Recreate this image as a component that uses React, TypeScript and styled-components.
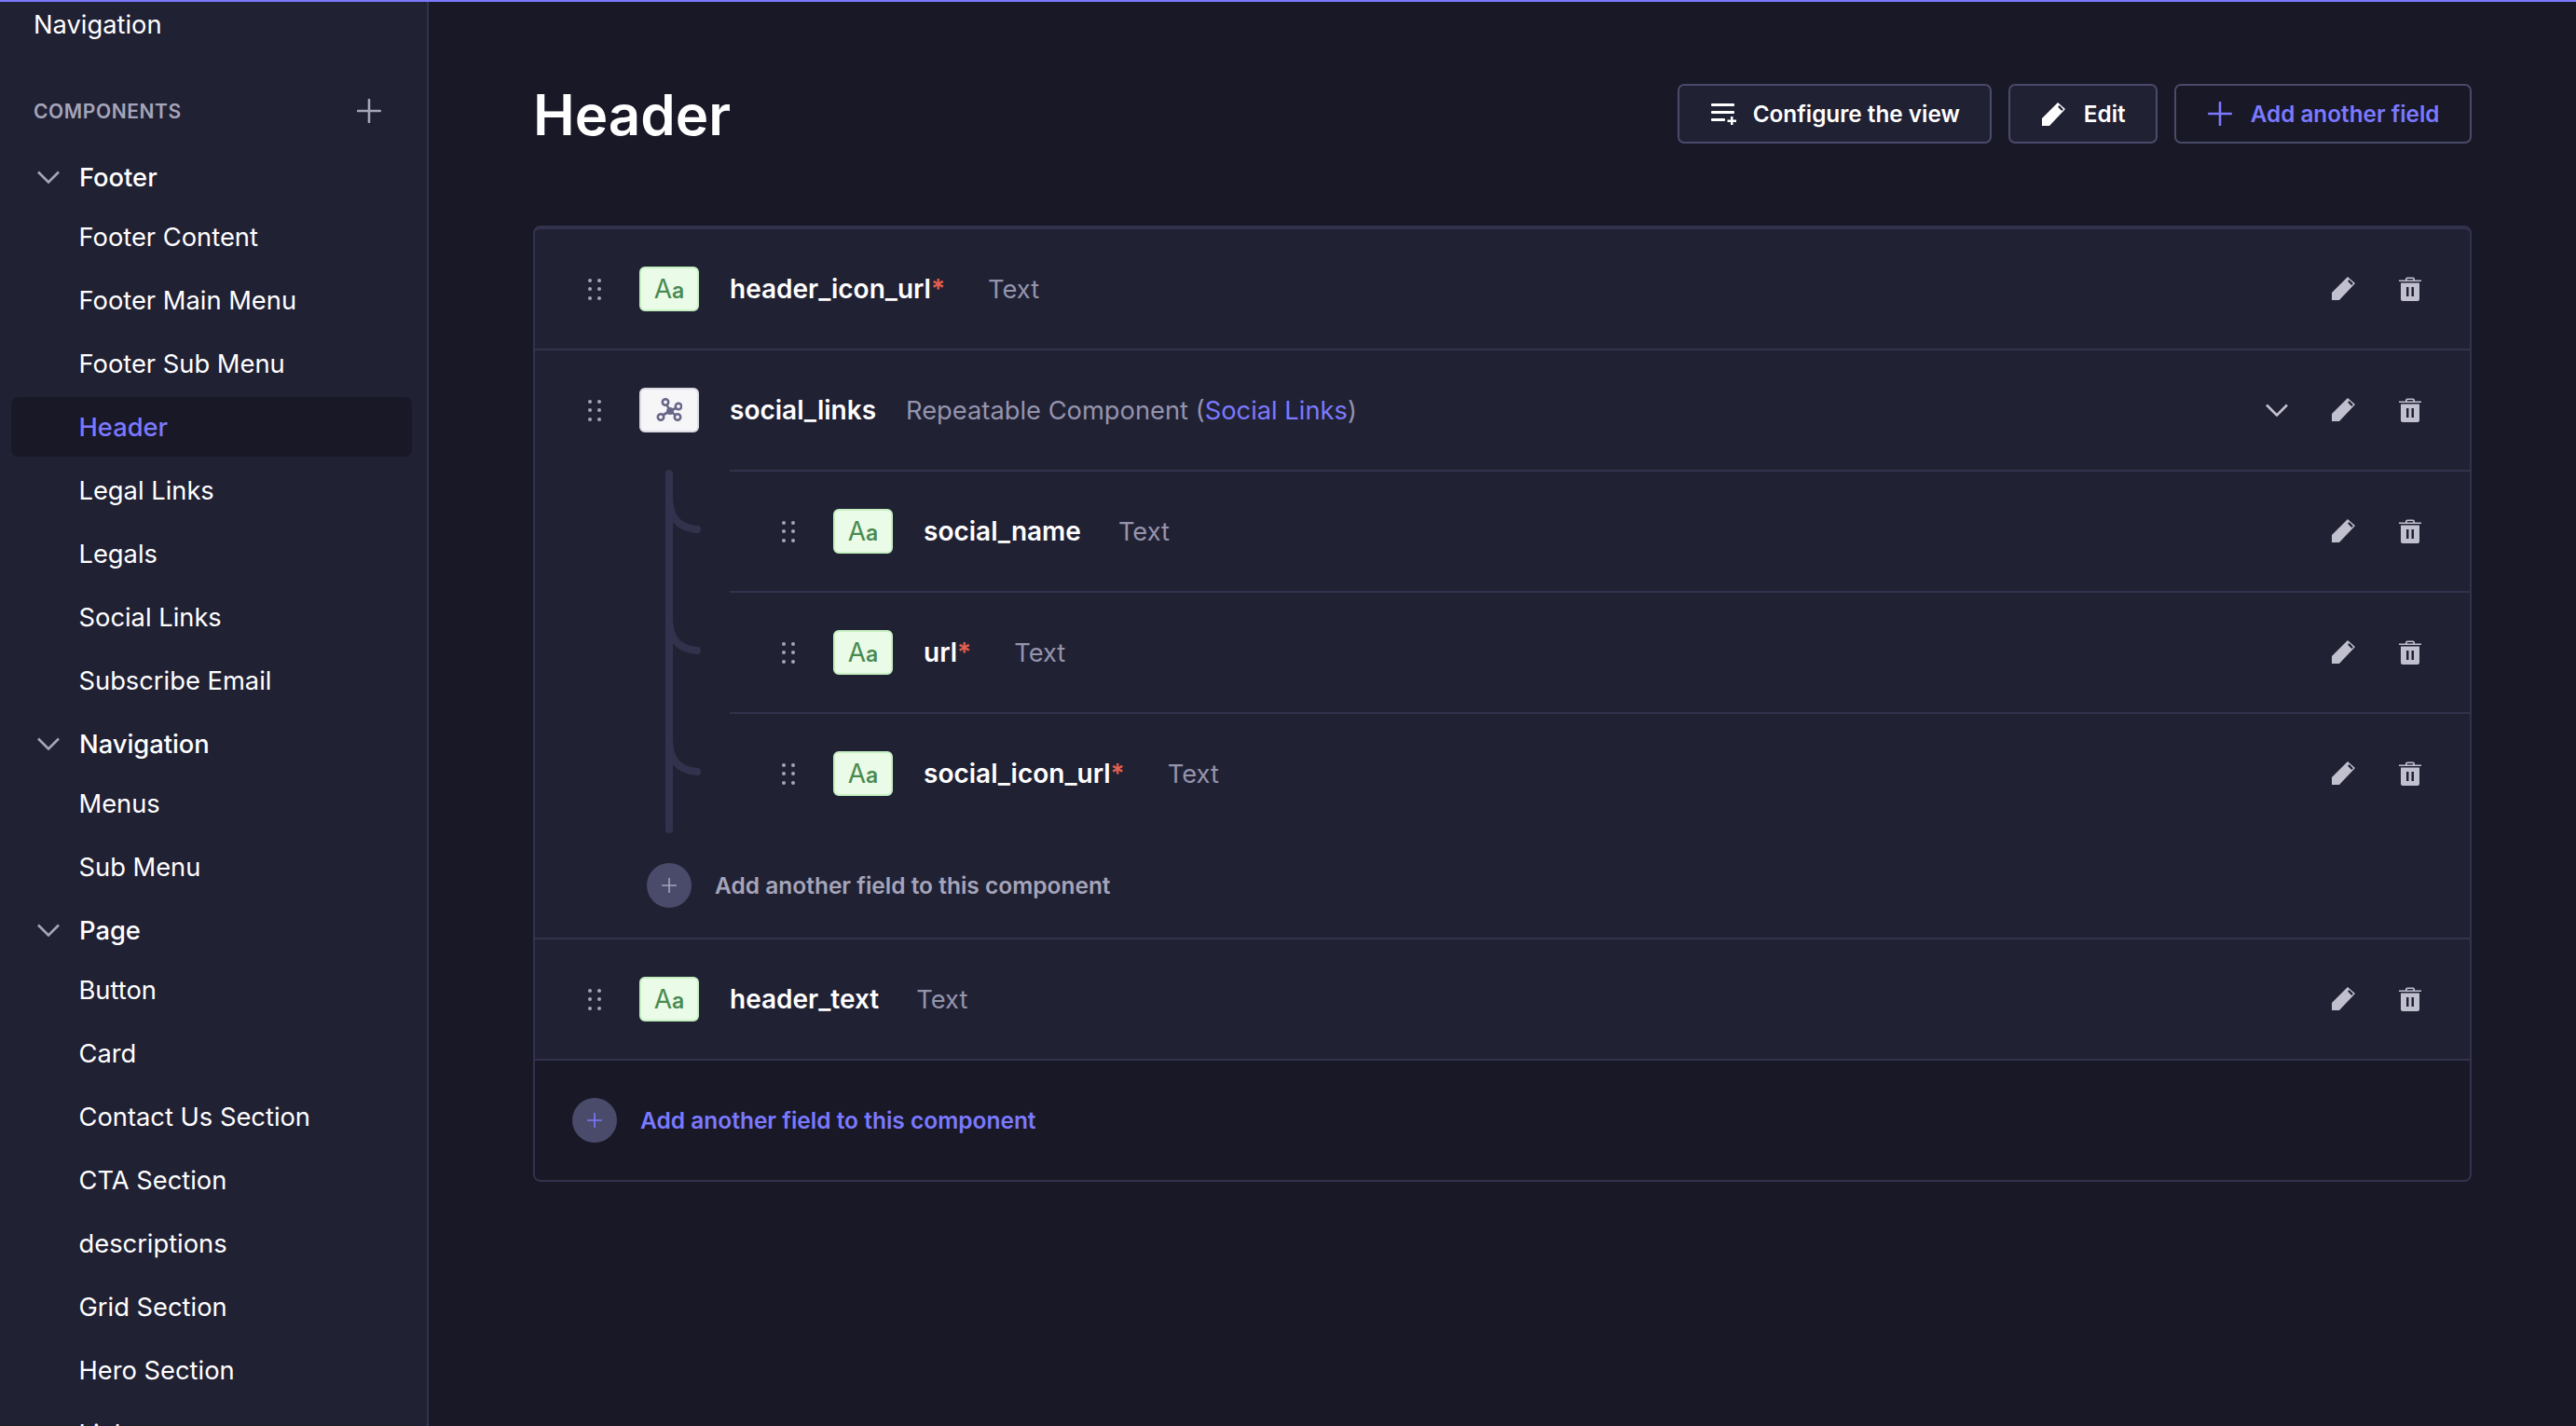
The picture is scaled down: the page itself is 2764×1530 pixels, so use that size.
import React from 'react'
import styled, { createGlobalStyle } from 'styled-components'

const GlobalStyle = createGlobalStyle`
  html, body {
    margin: 0;
    padding: 0;
    height: 100%;
    overflow: hidden;
    background: #181826;
    font-family: Inter, "Noto Sans", sans-serif;
  }
`

const Page = styled.div`
  width: 2764px;
  height: 1530px;
  display: flex;
  flex-direction: column;
  overflow: hidden;
  background: #181826;
  color: #ffffff;
`
const TopBar = styled.div`
  height: 2px;
  flex-shrink: 0;
  background: #7b79ff;
`
const Shell = styled.div`
  flex: 1;
  display: flex;
  min-height: 0;
`
const Sidebar = styled.nav`
  width: 458px;
  flex-shrink: 0;
  overflow: hidden;
  display: flex;
  flex-direction: column;
  background: #212134;
  border-right: 2px solid #32324d;
`
const TopLink = styled.div`
  height: 48px;
  flex-shrink: 0;
  display: flex;
  align-items: center;
  padding-left: 36px;
  font-size: 27.3px;
`
const SectionHead = styled.div`
  height: 48px;
  flex-shrink: 0;
  margin: 45px 0 13px;
  padding: 0 49px 0 36px;
  display: flex;
  align-items: center;
  justify-content: space-between;
  color: #a5a5ba;
  font-size: 21px;
  font-weight: 600;
  letter-spacing: 0.6px;
`
const GroupHead = styled.div`
  height: 60px;
  flex-shrink: 0;
  margin-top: 4px;
  padding-left: 40px;
  display: flex;
  align-items: center;
  gap: 21px;
  font-size: 27.3px;
  font-weight: 500;
`
const NavItem = styled.div<{ $active?: boolean }>`
  height: 64px;
  flex-shrink: 0;
  margin: 2px 16px 2px 12px;
  padding-left: 72.5px;
  display: flex;
  align-items: center;
  border-radius: 8px;
  font-size: 27.3px;
  color: ${({ $active }) => ($active ? '#7b79ff' : '#ffffff')};
  background: ${({ $active }) => ($active ? '#181826' : 'transparent')};
  font-weight: ${({ $active }) => ($active ? 500 : 400)};
`
const Main = styled.main`
  flex: 1;
  min-width: 0;
  padding: 88px 112px 0 112px;
`
const HeaderRow = styled.header`
  height: 64px;
  display: flex;
  align-items: center;
  justify-content: space-between;
  margin-bottom: 88px;
`
const Title = styled.h1`
  margin: 2px 0 0;
  font-size: 60px;
  font-weight: 600;
  line-height: 1;
`
const Actions = styled.div`
  display: flex;
  gap: 17.5px;
`
const Button = styled.button<{ $primary?: boolean; $gap: number }>`
  height: 64px;
  padding: 0 32.5px 0 34px;
  display: flex;
  align-items: center;
  gap: ${({ $gap }) => $gap}px;
  border: 2px solid #4a4a6a;
  border-radius: 7px;
  font-family: inherit;
  font-size: 24.3px;
  font-weight: 600;
  color: ${({ $primary }) => ($primary ? '#7b79ff' : '#ffffff')};
  background: ${({ $primary }) => ($primary ? '#181826' : '#212134')};
`
const FieldList = styled.section`
  border: 2px solid #32324d;
  border-top-width: 4px;
  border-radius: 8px;
  background: #212134;
  overflow: hidden;
`
const Row = styled.div<{ $nested?: boolean; $open?: boolean }>`
  height: 128px;
  padding: 0 52px 0 ${({ $nested }) => ($nested ? 56 : 57)}px;
  display: flex;
  align-items: center;
  border-bottom: ${({ $open }) => ($open ? 'none' : '2px solid #32324d')};
`
const SubList = styled.div`
  position: relative;
  margin-left: 209px;
  border-top: 2px solid #32324d;
  & > div:last-child {
    border-bottom: none;
  }
`
const TreeLines = styled.svg`
  position: absolute;
  left: -69px;
  top: -2px;
  width: 48px;
  height: 392px;
`
const Grip = styled.span`
  width: 14px;
  height: 23px;
  flex-shrink: 0;
  margin-right: 41px;
  display: grid;
  grid-template-columns: repeat(2, 4px);
  grid-template-rows: repeat(3, 4px);
  justify-content: space-between;
  align-content: space-between;
  i {
    border-radius: 50%;
    background: #a5a5ba;
  }
`
const Tile = styled.span<{ $kind: 'text' | 'component' }>`
  width: 64px;
  height: 48px;
  box-sizing: border-box;
  flex-shrink: 0;
  margin-right: 33px;
  display: flex;
  align-items: baseline;
  justify-content: center;
  line-height: 44px;
  border-radius: 6px;
  border: 2px solid ${({ $kind }) => ($kind === 'text' ? '#c6f0c2' : '#dcdce4')};
  background: ${({ $kind }) => ($kind === 'text' ? '#eafbe7' : '#f6f6f9')};
  color: #4a8a50;
  svg {
    align-self: center;
  }
`
const BigA = styled.span`
  font-size: 28px;
  font-weight: 400;
`
const SmallA = styled.span`
  font-size: 23px;
  font-weight: 600;
`
const FieldName = styled.span`
  font-size: 28px;
  font-weight: 600;
`
const Required = styled.span`
  color: #e0604f;
  margin-right: 6px;
`
const FieldType = styled.span<{ $tight?: boolean }>`
  margin-left: ${({ $tight }) => ($tight ? 32 : 40)}px;
  font-size: 27.3px;
  color: #9494ad;
`
const ComponentLink = styled.span`
  color: #7b79ff;
`
const RowActions = styled.div`
  margin-left: auto;
  margin-bottom: 1px;
  display: flex;
  align-items: center;
  gap: 47px;
  color: #c0c0cf;
`
const AddNested = styled.div`
  height: 112px;
  padding-left: 120px;
  display: flex;
  align-items: center;
  gap: 25px;
  color: #a5a5ba;
  font-size: 24.5px;
  font-weight: 600;
  border-bottom: 2px solid #32324d;
`
const AddFooter = styled.div`
  height: 128px;
  padding-left: 40px;
  display: flex;
  align-items: center;
  gap: 25px;
  background: #181826;
  color: #7b79ff;
  font-size: 24.5px;
  font-weight: 600;
`
const Circle = styled.span`
  width: 48px;
  height: 48px;
  flex-shrink: 0;
  display: flex;
  align-items: center;
  justify-content: center;
  border-radius: 50%;
  background: #4a4a6a;
`
const GroupChevron = styled.span`
  display: flex;
  color: #a5a5ba;
`

const Plus = ({ size }: { size: number }) => (
  <svg width={size} height={size} viewBox="0 0 24 24" fill="none" stroke="currentColor" strokeWidth={2.4} strokeLinecap="round">
    <path d="M12 1v22M1 12h22" />
  </svg>
)

const Chevron = () => (
  <svg width={24} height={14} viewBox="0 0 24 14" fill="none" stroke="currentColor" strokeWidth={2.6}>
    <path d="M1 1.500 12 12.500 23 1.500" />
  </svg>
)

const Pencil = () => (
  <svg width={25} height={25} viewBox="0 0 25 25" fill="currentColor">
    <path fillRule="evenodd" d="M0 25V17L17 0l8 7L8 25H0ZM18.700 3.100 17.100 4.700l4.200 4.200 1.600-1.600-4.200-4.200Z" />
  </svg>
)

const Trash = () => (
  <svg width={24} height={26} viewBox="0 0 24 26" fill="currentColor">
    <path d="M7 3.500V2.500C7 1.300 8 .4 9 .4h6c1.200 0 2 .9 2 2.100v1h7V5H0V3.500h7Zm1.800 0h6.400V2H8.800v1.500Z" fillRule="evenodd" />
    <path fillRule="evenodd" d="M2 6.500h20V24c0 1.100-.9 2-2 2H4c-1.100 0-2-.9-2-2V6.500Zm6 4.500v10h2.500V11H8Zm5.500 0v10H16V11h-2.500Z" />
  </svg>
)

const ConfigureIcon = () => (
  <svg width={28} height={24} viewBox="0 0 28 24" fill="currentColor">
    <rect x="0" y="1" width="25" height="3" rx="1" />
    <rect x="0" y="9" width="25" height="3" rx="1" />
    <rect x="0" y="17" width="15" height="3" rx="1" />
    <path d="M21 15h2.500v3.500H27V21h-3.500v3H21v-3h-3.500v-2.500H21V15Z" />
  </svg>
)

const ComponentIcon = () => (
  <svg width={28} height={26} viewBox="0 0 28 26" fill="none" stroke="#666687" strokeWidth={2.6}>
    <path d="M11 6.500 15 14M22 10.500 15 14M7 18.500 15 14M21 18.500 15 14" />
    <circle cx="15" cy="14" r="2.600" />
    <circle cx="10" cy="4.500" r="3.200" />
    <circle cx="24" cy="9" r="3.200" />
    <circle cx="5" cy="20.500" r="3.200" />
    <circle cx="23" cy="20.500" r="3.200" />
  </svg>
)

const GripDots = () => (
  <Grip>
    {Array.from({ length: 6 }).map((_, i) => (
      <i key={i} />
    ))}
  </Grip>
)

const TextTile = () => (
  <Tile $kind="text">
    <BigA>A</BigA>
    <SmallA>a</SmallA>
  </Tile>
)

interface FieldRowProps {
  name: string
  required?: boolean
  nested?: boolean
}

const FieldRow: React.FC<FieldRowProps> = ({ name, required, nested }) => (
  <Row $nested={nested}>
    <GripDots />
    <TextTile />
    <FieldName>
      {name}
      {required && <Required>*</Required>}
    </FieldName>
    <FieldType>Text</FieldType>
    <RowActions>
      <Pencil />
      <Trash />
    </RowActions>
  </Row>
)

const groups = [
  {
    name: 'Footer',
    items: [
      'Footer Content',
      'Footer Main Menu',
      'Footer Sub Menu',
      'Header',
      'Legal Links',
      'Legals',
      'Social Links',
      'Subscribe Email',
    ],
  },
  { name: 'Navigation', items: ['Menus', 'Sub Menu'] },
  {
    name: 'Page',
    items: ['Button', 'Card', 'Contact Us Section', 'CTA Section', 'descriptions', 'Grid Section', 'Hero Section', 'Link'],
  },
]

const App = () => (
  <Page>
    <GlobalStyle />
    <TopBar />
    <Shell>
      <Sidebar>
        <TopLink>Navigation</TopLink>
        <SectionHead>
          COMPONENTS
          <Plus size={26} />
        </SectionHead>
        {groups.map((group) => (
          <React.Fragment key={group.name}>
            <GroupHead>
              <GroupChevron>
                <Chevron />
              </GroupChevron>
              {group.name}
            </GroupHead>
            {group.items.map((item) => (
              <NavItem key={item} $active={item === 'Header'}>
                {item}
              </NavItem>
            ))}
          </React.Fragment>
        ))}
      </Sidebar>
      <Main>
        <HeaderRow>
          <Title>Header</Title>
          <Actions>
            <Button $gap={17}>
              <ConfigureIcon />
              Configure the view
            </Button>
            <Button $gap={20}>
              <Pencil />
              Edit
            </Button>
            <Button $primary $gap={20}>
              <Plus size={26} />
              Add another field
            </Button>
          </Actions>
        </HeaderRow>
        <FieldList>
          <FieldRow name="header_icon_url" required />
          <Row $open>
            <GripDots />
            <Tile $kind="component">
              <ComponentIcon />
            </Tile>
            <FieldName>social_links</FieldName>
            <FieldType $tight>
              Repeatable Component (<ComponentLink>Social Links</ComponentLink>)
            </FieldType>
            <RowActions>
              <Chevron />
              <Pencil />
              <Trash />
            </RowActions>
          </Row>
          <SubList>
            <TreeLines viewBox="0 0 48 392" fill="none" stroke="#32324d" strokeWidth={8} strokeLinecap="round">
              <path d="M4 4V386" />
              <path d="M4 28C4 50 12 62 34 64M4 158C4 180 12 192 34 194M4 288C4 310 12 322 34 324" />
            </TreeLines>
            <FieldRow name="social_name" nested />
            <FieldRow name="url" required nested />
            <FieldRow name="social_icon_url" required nested />
          </SubList>
          <AddNested>
            <Circle>
              <Plus size={16} />
            </Circle>
            Add another field to this component
          </AddNested>
          <FieldRow name="header_text" />
          <AddFooter>
            <Circle>
              <Plus size={16} />
            </Circle>
            Add another field to this component
          </AddFooter>
        </FieldList>
      </Main>
    </Shell>
  </Page>
)

export default App
